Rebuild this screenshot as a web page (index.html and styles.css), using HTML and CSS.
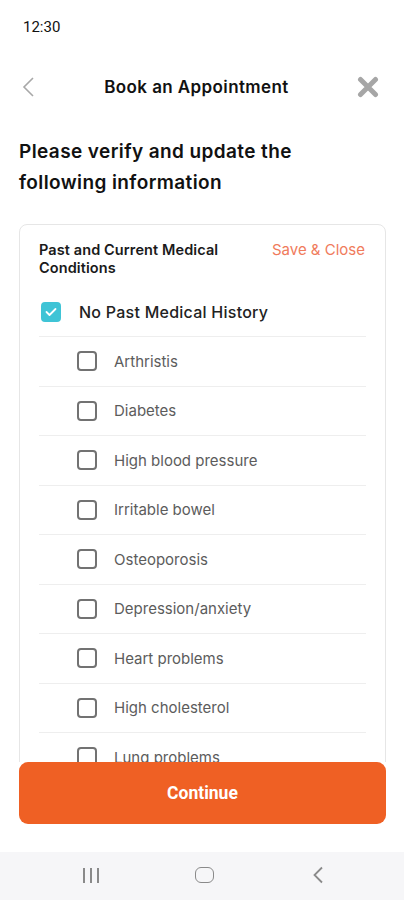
FILE: index.html
```html
<!DOCTYPE html>
<html lang="en">
<head>
  <meta charset="UTF-8" />
  <meta name="viewport" content="width=device-width, initial-scale=1.0"/>
  <title>Book an Appointment</title>
  <link rel="stylesheet" href="styles.css">
</head>
<body>
  <div class="status-bar">12:30</div>

  <header class="top-bar">
    <div class="back">
      <svg width="12" height="20" viewBox="0 0 12 20"><path d="M11 1 L2 10 L11 19" fill="none" stroke="#a8a8a8" stroke-width="1.6"/></svg>
    </div>
    <h1>Book an Appointment</h1>
    <div class="close">
      <svg width="22" height="22" viewBox="0 0 22 22"><path d="M3.5 3.5 L18.5 18.5 M18.5 3.5 L3.5 18.5" stroke="#a6a6a6" stroke-width="5" stroke-linecap="round"/></svg>
    </div>
  </header>

  <div class="scroll">
    <h2 class="intro">Please verify and update the following information</h2>

    <div class="card">
      <div class="card-head">
        <h3>Past and Current Medical Conditions</h3>
        <a class="save">Save &amp; Close</a>
      </div>

      <div class="row main-row">
        <span class="box checked">
          <svg width="12" height="10" viewBox="0 0 12 10"><path d="M1.5 5 L4.5 8 L10.5 2" fill="none" stroke="#fff" stroke-width="1.8" stroke-linecap="round" stroke-linejoin="round"/></svg>
        </span>
        <span class="label">No Past Medical History</span>
      </div>

      <ul class="conditions">
        <li class="row"><span class="box"></span><span class="label">Arthristis</span></li>
        <li class="row"><span class="box"></span><span class="label">Diabetes</span></li>
        <li class="row"><span class="box"></span><span class="label">High blood pressure</span></li>
        <li class="row"><span class="box"></span><span class="label">Irritable bowel</span></li>
        <li class="row"><span class="box"></span><span class="label">Osteoporosis</span></li>
        <li class="row"><span class="box"></span><span class="label">Depression/anxiety</span></li>
        <li class="row"><span class="box"></span><span class="label">Heart problems</span></li>
        <li class="row"><span class="box"></span><span class="label">High cholesterol</span></li>
        <li class="row"><span class="box"></span><span class="label">Lung problems</span></li>
        <li class="row"><span class="box"></span><span class="label">Cancer</span></li>
      </ul>
    </div>
  </div>

  <div class="footer">
    <button class="continue">Continue</button>
  </div>

  <nav class="nav-bar">
    <span class="nav-recent"><i></i><i></i><i></i></span>
    <span class="nav-home"></span>
    <span class="nav-back">
      <svg width="12" height="18" viewBox="0 0 12 18"><path d="M10 1.5 L2.5 9 L10 16.5" fill="none" stroke="#8a8a8a" stroke-width="1.8"/></svg>
    </span>
  </nav>
</body>
</html>
```

FILE: styles.css
```css
* {
  margin: 0;
  padding: 0;
  box-sizing: border-box;
  font-family: 'Inter', 'Roboto', sans-serif;
}

body {
  width: 404px;
  height: 900px;
  background: #ffffff;
  color: #1c1c1c;
  display: flex;
  flex-direction: column;
  overflow: hidden;
}

.status-bar {
  height: 55px;
  padding: 18px 0 0 23px;
  font-family: 'Roboto', sans-serif;
  font-size: 15px;
  line-height: 18px;
  color: #111;
}

.top-bar {
  height: 64px;
  display: flex;
  align-items: center;
  padding: 0 19px 0 22px;
}

.back {
  width: 28px;
  display: flex;
}

.top-bar h1 {
  flex: 1;
  text-align: center;
  font-size: 17px;
  font-weight: 600;
  letter-spacing: 0.4px;
  color: #111;
  padding-right: 6px;
}

.close {
  width: 36px;
  display: flex;
  justify-content: flex-end;
  padding-right: 6px;
}

.scroll {
  height: 643px;
  overflow: hidden;
  padding: 0 18px 0 19px;
}

.intro {
  margin-top: 16.5px;
  font-size: 19px;
  font-weight: 600;
  line-height: 31px;
  color: #111;
  letter-spacing: 0.4px;
  width: 320px;
}

.card {
  margin-top: 26.5px;
  border: 1px solid #e6e6e6;
  border-radius: 8px;
  padding: 16px 19px 0 19px;
}

.card-head {
  display: flex;
  justify-content: space-between;
  align-items: flex-start;
}

.card-head h3 {
  width: 205px;
  font-size: 14.5px;
  font-weight: 600;
  line-height: 18px;
  letter-spacing: 0.1px;
  color: #1a1a1a;
}

.save {
  font-size: 15px;
  color: #f07b5c;
  line-height: 18px;
  margin-right: 1px;
}

.row {
  display: flex;
  align-items: center;
  height: 49.5px;
  border-bottom: 1px solid #eeeeee;
}

.main-row {
  margin-top: 10px;
  height: 50px;
  padding-left: 2px;
  gap: 18px;
}

.conditions {
  list-style: none;
}

.conditions .row {
  padding-left: 38px;
  gap: 17px;
}

.box {
  width: 20px;
  height: 20px;
  border: 2px solid #727272;
  border-radius: 4px;
  flex-shrink: 0;
  display: flex;
  align-items: center;
  justify-content: center;
}

.box.checked {
  background: #3fc4d6;
  border-color: #3fc4d6;
}

.main-row .label {
  font-size: 16px;
  font-weight: 500;
  letter-spacing: 0.25px;
  color: #222;
}

.conditions .label {
  font-size: 15px;
  color: #5c5c5c;
}

.footer {
  padding: 0 18px 0 19px;
  height: 90px;
}

.continue {
  width: 100%;
  height: 62px;
  border: none;
  border-radius: 9px;
  background: #ef6024;
  color: #fff;
  font-family: 'Roboto', sans-serif;
  font-size: 17.5px;
  font-weight: 700;
}

.nav-bar {
  height: 48px;
  background: #f6f6f8;
  display: flex;
  align-items: center;
  padding: 0 0 2px 83px;
}

.nav-recent {
  display: flex;
  gap: 5px;
  width: 16px;
}

.nav-recent i {
  width: 2px;
  height: 15px;
  background: #8a8a8a;
}

.nav-home {
  width: 19px;
  height: 16px;
  border: 1.8px solid #8a8a8a;
  border-radius: 6px;
  margin: 0 0 0 96px;
}

.nav-back {
  display: flex;
  margin-left: 98px;
}
```
